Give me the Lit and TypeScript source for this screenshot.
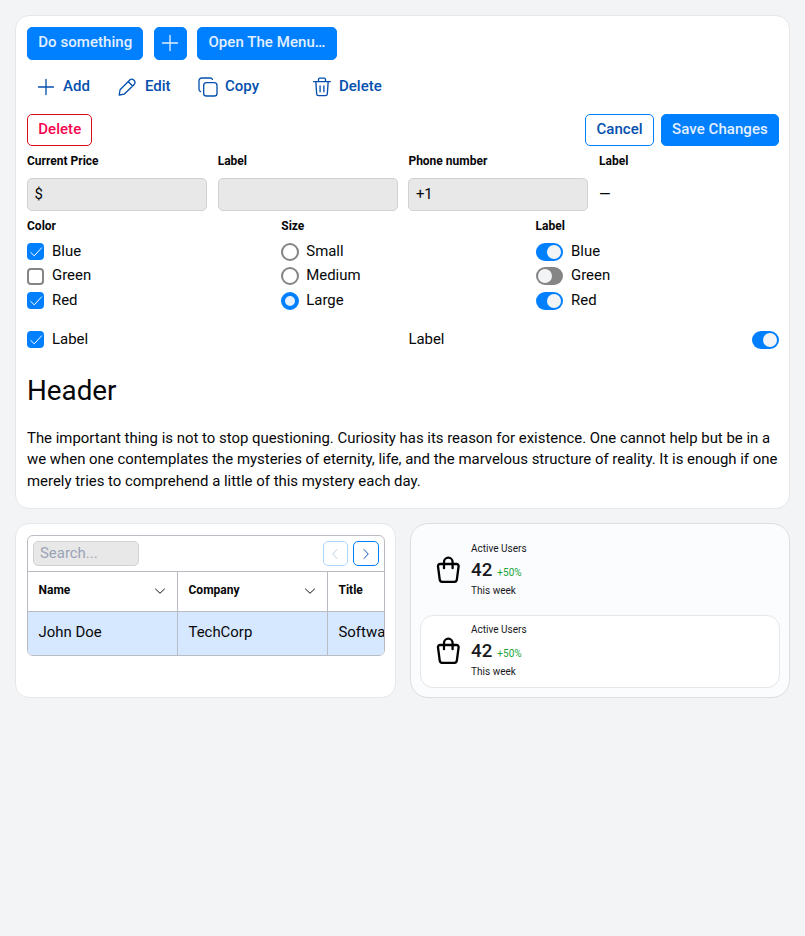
import { LitElement, html, css, svg } from "lit";
import { customElement } from "lit/decorators.js";
import { classMap } from "lit/directives/class-map.js";

const icon = (name: string, body: unknown, box = "0 0 24 24") =>
  html`<svg class="icon ${name}" viewBox=${box}>${body}</svg>`;

const plus = () => icon("plus", svg`<path d="M12 3v18M3 12h18"/>`);
const pencil = () =>
  icon("pencil", svg`<path d="M2.6 21.6l1.1-6.3L15.3 3.600a3.300 3.300 0 0 1 4.700 0l.6.6a3.300 3.300 0 0 1 0 4.700L8.900 20.500zM13.400 5.500l5.300 5.300"/>`);
const copy = () =>
  icon("copy", svg`<rect x="6.8" y="6.8" width="16" height="16" rx="3.4"/><path d="M3.1 17.6A3 3 0 0 1 1.2 14.6V4.6a3.4 3.4 0 0 1 3.4-3.4h10a3 3 0 0 1 2.8 1.7"/>`);
const trash = () =>
  icon("trash", svg`<path d="M2 5.6h20M4.6 5.6l1 14.6a2.4 2.4 0 0 0 2.3 2.2h8.2a2.4 2.4 0 0 0 2.3-2.2l1-14.6M7.8 5.6V3A1.6 1.6 0 0 1 9.4 1.4h5.2A1.6 1.6 0 0 1 16.2 3v2.6M9.7 10.6v7.2M14.3 10.6v7.2"/>`);
const check = () => icon("check", svg`<path d="M3 12.8l6 5.8L21.5 5"/>`);
const chevron = (dir: string) => icon(`chev ${dir}`, svg`<path d="M3 8l9 8.5L21 8"/>`);
const bag = () =>
  icon("bag", svg`<path d="M4 8h16.6a2 2 0 0 1 2 2.3l-1.7 13a3 3 0 0 1-3 2.6H6.7a3 3 0 0 1-3-2.6L2 10.3a2 2 0 0 1 2-2.3zM8 12.2V6a4.3 4.3 0 0 1 8.6 0v6.2"/>`, "0 0 24.6 27.4");

@customElement("app-root")
export class AppRoot extends LitElement {
  static styles = css`
    :host {
      display: block;
      box-sizing: border-box;
      min-height: 936px;
      padding: 15px;
      background: #f3f4f6;
      color: #060709;
      font: 14.93px/21.6px Roboto, sans-serif;
    }
    * { box-sizing: border-box; }
    .icon { display: block; flex: none; fill: none; stroke: currentColor; stroke-width: 1.6; stroke-linecap: round; stroke-linejoin: round; width: 20px; height: 20px; }
    .card { background: #fff; border: 1px solid #e5e7e9; border-radius: 14px; padding: 11px 10px 11px 11px; }
    .main { height: 494px; }
    .row { display: flex; align-items: center; }
    .btn { display: flex; align-items: center; justify-content: center; height: 33px; padding: 0 10.2px 2px; border: 1px solid #0080ff; border-radius: 5px; font-size: 15px; font-weight: 500; white-space: nowrap; letter-spacing: 0.06px; }
    .btn.short { height: 32px; padding-bottom: 1px; }
    .btn.primary { background: #0080ff; color: #e3efff; }
    .outline { color: #0550ae; }
    .btn.danger { color: #f5054f; border-color: #d90c1c; }
    .btn.square { width: 33px; padding: 0 0 1px; }
    .actions { gap: 10.4px; }
    .tools { height: 54px; padding: 0 0 0 9px; color: #0550ae; font-size: 15px; font-weight: 500; }
    .tool { display: flex; align-items: center; gap: 7px; }
    .tool span { padding-bottom: 1px; }
    .add { width: 81px; }
    .edit { width: 81px; }
    .edit .icon { margin-right: 1px; }
    .copybtn { width: 114px; }
    .form { gap: 7px; }
    .push { margin-left: auto; }
    .label { font-size: 12px; line-height: 16px; font-weight: 700; }
    .fields { display: grid; grid-template-columns: repeat(4, 1fr); gap: 10.8px; padding-top: 7px; }
    .input { display: flex; align-items: center; height: 33px; margin-top: 9px; padding: 0 6.5px; background: #e8e8e8; border: 1px solid #d1d1d2; border-radius: 5px; }
    .plain { background: none; border-color: transparent; padding-left: 0; margin-left: -1px; }
    .choices { display: grid; grid-template-columns: repeat(3, 1fr); gap: 10.8px; padding-top: 7px; }
    .options { display: grid; grid-auto-rows: 24.6px; padding-top: 5.5px; }
    .option { display: flex; align-items: center; gap: 8px; }
    .option span { padding-bottom: 0.6px; }
    .box { width: 17px; height: 17px; border: 2px solid #858585; border-radius: 4px; display: flex; align-items: center; justify-content: center; flex: none; background: #fff; }
    .check { width: 14px; height: 14px; color: #fff; stroke-width: 1.7; }
    .box.on { border-color: #0080ff; background: #0080ff; }
    .radio { width: 18px; height: 18px; border-radius: 50%; margin-right: -1px; }
    .box.radio { border-radius: 50%; }
    .radio.on { border-width: 4px; background: #e8f1ff; }
    .switch { display: flex; width: 27.5px; height: 18px; padding: 2px; border-radius: 9px; background: #858585; flex: none; }
    .switch.on { justify-content: flex-end; background: #0080ff; }
    .knob { width: 14px; height: 14px; border-radius: 50%; background: #f3f4f6; }
    .pair { display: grid; grid-template-columns: 1fr 1fr; gap: 10.8px; padding-top: 15.5px; height: 37.5px; }
    .spread { justify-content: space-between; }
    h1 { margin: 23px 0 0; font-size: 27.8px; line-height: 34px; font-weight: 400; }
    p { margin: 20px 0 0; line-height: 21.5px; }
    .bottom { display: grid; grid-template-columns: 1fr 1fr; gap: 14px; padding-top: 14px; }
    .bottom .card { height: 175px; min-width: 0; }
    .table { border: 1px solid #b9bcc2; border-radius: 6px; overflow: hidden; height: 121px; }
    .bar { height: 36px; padding: 0 5px; border-bottom: 1px solid #b9bcc2; gap: 5px; }
    .search { width: 106px; height: 25px; margin: 0; padding-left: 6px; color: #9aa3b5; }
    .btn.page { width: 25.5px; height: 25px; padding: 0; }
    .btn.dim { border-color: #b0d8ff; color: #b4cbe6; }
    .chev { width: 12px; height: 12px; stroke-width: 1.9; }
    .left { transform: rotate(90deg); }
    .right { transform: rotate(-90deg); }
    .grid { display: grid; grid-template-columns: 150px 150px 150px; }
    .cell { display: flex; align-items: center; justify-content: space-between; padding: 0 11px 3px 10.5px; border-right: 1px solid #b9bcc2; white-space: nowrap; }
    .head { height: 40px; border-bottom: 1px solid #b9bcc2; }
    .head .chev { margin-top: 2px; }
    .data { height: 44px; background: #d6e8ff; }
    .bottom .stats { background: #fbfcfe; border-color: #dcdee1; border-radius: 18px; padding: 9px; }
    .stat { display: flex; align-items: center; height: 73px; padding: 0 0 0 15px; border: 1px solid transparent; border-radius: 13px; font-size: 10px; line-height: 14px; color: #17191c; }
    .raised { margin-top: 9px; padding-bottom: 2px; background: #fff; border-color: #e5e7e9; }
    .bag { width: 24.6px; height: 27.4px; stroke-width: 2.3; color: #000; margin-right: 11px; }
    .value { display: flex; align-items: baseline; gap: 5px; height: 28px; line-height: 28px; }
    .big { font-size: 18.7px; font-weight: 500; }
    .up { color: #1aa637; }
  `;

  private option(kind: string, text: string, on: boolean) {
    return html`<div class="option">${this.control(kind, on)}<span>${text}</span></div>`;
  }

  private control(kind: string, on: boolean) {
    if (kind === "switch") return html`<div class=${classMap({ switch: true, on })}><i class="knob"></i></div>`;
    return html`<div class=${classMap({ box: true, radio: kind === "radio", on })}>${kind === "box" && on ? check() : ""}</div>`;
  }

  private group(title: string, kind: string, items: [string, boolean][]) {
    return html`<div><div class="label">${title}</div>
      <div class="options">${items.map(([t, on]) => this.option(kind, t, on))}</div></div>`;
  }

  private field(title: string, value: string, plain = false) {
    return html`<div><div class="label">${title}</div>
      <div class=${classMap({ input: true, plain })}>${value}</div></div>`;
  }

  private stat(extra: string) {
    return html`<div class="stat ${extra}">${bag()}
      <div><div>Active Users</div>
        <div class="value"><span class="big">42</span><span class="up">+50%</span></div>
        <div>This week</div></div></div>`;
  }

  render() {
    return html`
      <section class="card main">
        <div class="row actions">
          <div class="btn primary">Do something</div>
          <div class="btn primary square">${plus()}</div>
          <div class="btn primary">Open The Menu…</div>
        </div>
        <div class="row tools">
          <div class="tool add">${plus()}<span>Add</span></div>
          <div class="tool edit">${pencil()}<span>Edit</span></div>
          <div class="tool copybtn">${copy()}<span>Copy</span></div>
          <div class="tool">${trash()}<span>Delete</span></div>
        </div>
        <div class="row form">
          <div class="btn short danger">Delete</div>
          <div class="btn short outline push">Cancel</div>
          <div class="btn short primary">Save Changes</div>
        </div>
        <div class="fields">
          ${this.field("Current Price", "$")}
          ${this.field("Label", "")}
          ${this.field("Phone number", "+1")}
          ${this.field("Label", "—", true)}
        </div>
        <div class="choices">
          ${this.group("Color", "box", [["Blue", true], ["Green", false], ["Red", true]])}
          ${this.group("Size", "radio", [["Small", false], ["Medium", false], ["Large", true]])}
          ${this.group("Label", "switch", [["Blue", true], ["Green", false], ["Red", true]])}
        </div>
        <div class="pair">
          ${this.option("box", "Label", true)}
          <div class="option spread"><span>Label</span>${this.control("switch", true)}</div>
        </div>
        <h1>Header</h1>
        <p>The important thing is not to stop questioning. Curiosity has its reason for existence. One cannot help but be in a we when one contemplates the mysteries of eternity, life, and the marvelous structure of reality. It is enough if one merely tries to comprehend a little of this mystery each day.</p>
      </section>
      <div class="bottom">
        <section class="card">
          <div class="table">
            <div class="row bar">
              <div class="input search">Search...</div>
              <div class="btn page dim push">${chevron("left")}</div>
              <div class="btn page outline">${chevron("right")}</div>
            </div>
            <div class="grid">
              <div class="cell head label">Name${chevron("down")}</div>
              <div class="cell head label">Company${chevron("down")}</div>
              <div class="cell head label">Title${chevron("down")}</div>
              <div class="cell data">John Doe</div>
              <div class="cell data">TechCorp</div>
              <div class="cell data">Software Engineer</div>
            </div>
          </div>
        </section>
        <section class="card stats">${this.stat("first")}${this.stat("raised")}</section>
      </div>
    `;
  }
}
